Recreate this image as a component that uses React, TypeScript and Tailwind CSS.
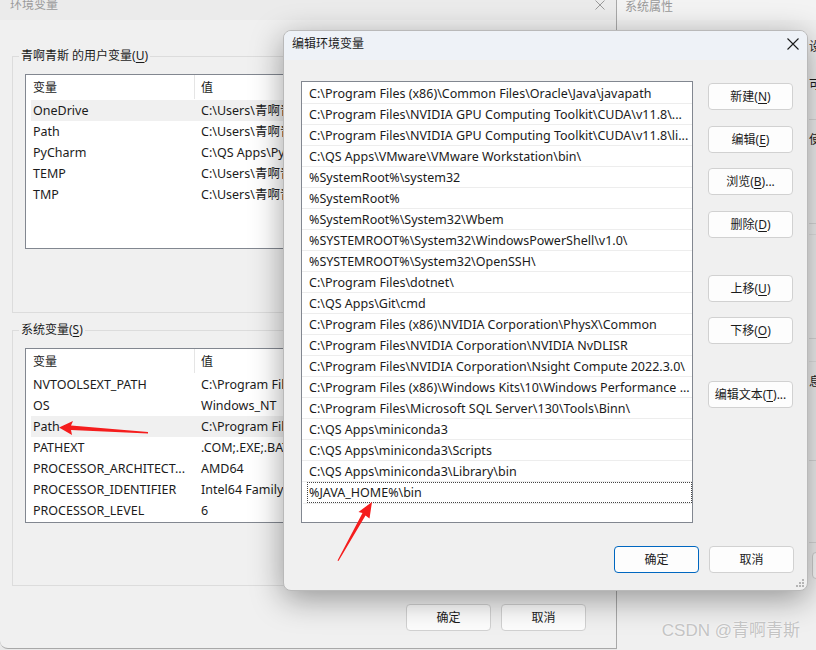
import * as React from 'react';

const FONT = "font-['Noto_Sans','Noto_Sans_CJK_SC',sans-serif]";

const userVars = [
    { name: 'OneDrive', value: 'C:\\Users\\青啊青斯\\OneDrive' },
    { name: 'Path', value: 'C:\\Users\\青啊青斯\\AppData' },
    { name: 'PyCharm', value: 'C:\\QS Apps\\PyCharm\\bin' },
    { name: 'TEMP', value: 'C:\\Users\\青啊青斯\\AppData' },
    { name: 'TMP', value: 'C:\\Users\\青啊青斯\\AppData' },
];

const sysVars = [
    { name: 'NVTOOLSEXT_PATH', value: 'C:\\Program Files\\NVIDIA' },
    { name: 'OS', value: 'Windows_NT' },
    { name: 'Path', value: 'C:\\Program Files\\Common' },
    { name: 'PATHEXT', value: '.COM;.EXE;.BAT;.CMD' },
    { name: 'PROCESSOR_ARCHITECT...', value: 'AMD64' },
    { name: 'PROCESSOR_IDENTIFIER', value: 'Intel64 Family 6 Model' },
    { name: 'PROCESSOR_LEVEL', value: '6' },
];

const paths = [
    'C:\\Program Files (x86)\\Common Files\\Oracle\\Java\\javapath',
    'C:\\Program Files\\NVIDIA GPU Computing Toolkit\\CUDA\\v11.8\\...',
    'C:\\Program Files\\NVIDIA GPU Computing Toolkit\\CUDA\\v11.8\\li...',
    'C:\\QS Apps\\VMware\\VMware Workstation\\bin\\',
    '%SystemRoot%\\system32',
    '%SystemRoot%',
    '%SystemRoot%\\System32\\Wbem',
    '%SYSTEMROOT%\\System32\\WindowsPowerShell\\v1.0\\',
    '%SYSTEMROOT%\\System32\\OpenSSH\\',
    'C:\\Program Files\\dotnet\\',
    'C:\\QS Apps\\Git\\cmd',
    'C:\\Program Files (x86)\\NVIDIA Corporation\\PhysX\\Common',
    'C:\\Program Files\\NVIDIA Corporation\\NVIDIA NvDLISR',
    'C:\\Program Files\\NVIDIA Corporation\\Nsight Compute 2022.3.0\\',
    'C:\\Program Files (x86)\\Windows Kits\\10\\Windows Performance ...',
    'C:\\Program Files\\Microsoft SQL Server\\130\\Tools\\Binn\\',
    'C:\\QS Apps\\miniconda3',
    'C:\\QS Apps\\miniconda3\\Scripts',
    'C:\\QS Apps\\miniconda3\\Library\\bin',
    '%JAVA_HOME%\\bin',
];

// --- Button ---
const Btn = ({ label, hot, suffix, primary }: { label: string; hot?: string; suffix?: string; primary?: boolean }) => (
    <div
        className={`w-[85px] h-[27px] shrink-0 flex items-center justify-center rounded-[4px] border bg-[#fdfdfd] text-[12px] text-[#1b1b1b] ${
            primary ? 'border-[#0067c0]' : 'border-[#d1d1d1]'
        }`}
    >
        {label}
        {hot && (
            <>
                (<span className="underline underline-offset-2">{hot}</span>)
            </>
        )}
        {suffix}
    </div>
);

// --- Variable list (back window) ---
const VarList = ({ rows, selected }: { rows: { name: string; value: string }[]; selected: number }) => (
    <div className="ml-[6px] w-[579px] h-[175px] border border-[#828790] bg-white text-[12.5px] text-[#1b1b1b]">
        <div className="h-[25px] flex items-center ml-[5px] text-[12px]">
            <div className="w-[163px] pl-[2px]">变量</div>
            <div className="w-px h-[24px] self-start bg-[#e5e5e5]" />
            <div className="pl-[6px]">值</div>
        </div>
        {rows.map((r, i) => (
            <div key={r.name} className={`h-[21px] pt-[2px] flex items-center ml-[5px] ${i === selected ? 'bg-[#f0f0f0]' : ''}`}>
                <div className="w-[170px] pl-[2px] whitespace-nowrap overflow-hidden">{r.name}</div>
                <div className="whitespace-nowrap">{r.value}</div>
            </div>
        ))}
    </div>
);

export default function App() {
    return (
        <div className={`relative w-[816px] h-[650px] overflow-hidden bg-[#e9e9e9] ${FONT}`}>
            {/* --- System properties window (far back) --- */}
            <div className="absolute left-[617px] top-[-12px] w-[220px] h-[680px] bg-[#f3f3f3]">
                <div className="h-[32px] flex items-center pl-[8px] pt-[6px] text-[12px] text-[#9a9a9a]">系统属性</div>
                <div className="pl-[192px] text-[12px] leading-[18px] text-[#1b1b1b] bg-[#f0f0f0] h-full">
                    <div className="h-[18px]" />
                    <div className="h-[18px]">设置</div>
                    <div className="h-[20px]" />
                    <div className="h-[18px]">可</div>
                    <div className="h-[25px]" />
                    <div className="h-[12px] border-t border-[#d8d8d8]" />
                    <div className="h-[18px]">使</div>
                    <div className="h-[74px]" />
                    <div className="h-[11px] border-t border-[#d8d8d8]" />
                    <div className="h-[104px] border-t border-[#e2e2e2]" />
                    <div className="h-[23px] border-t border-[#d8d8d8]" />
                    <div className="h-[12px] border-t border-[#e2e2e2]" />
                    <div className="h-[18px]">息</div>
                    <div className="h-[69px]" />
                    <div className="h-[82px] border-t border-[#d8d8d8]" />
                    <div className="h-[10px] border-t border-[#d8d8d8]" />
                    <div className="ml-[3px] w-[85px] h-[27px] rounded-[4px] border border-[#d1d1d1] bg-[#fdfdfd]" />
                </div>
            </div>

            {/* --- Environment variables window (back) --- */}
            <div className="absolute left-0 top-[-12px] w-[617px] h-[661px] bg-[#f0f0f0] border-r border-b border-[#a8a8a8] rounded-bl-[8px] flex flex-col">
                <div className="h-[32px] shrink-0 flex items-center justify-between pl-[10px] pr-[10px] pt-[2px] bg-[#ebebeb] text-[12px] text-[#9a9a9a]">
                    <span>环境变量</span>
                    <svg width="10" height="10" viewBox="0 0 10 10" className="mr-[1px]">
                        <path d="M0.5 0.5 L9.5 9.5 M9.5 0.5 L0.5 9.5" stroke="#9a9a9a" strokeWidth="1" />
                    </svg>
                </div>

                <fieldset className="ml-[12px] mt-[27px] w-[592px] h-[266px] border border-[#dcdcdc] pl-[6px]">
                    <legend className="px-[2px] text-[12px] leading-[18px] text-[#1b1b1b]">
                        青啊青斯 的用户变量(<span className="underline underline-offset-2">U</span>)
                    </legend>
                    <div className="mt-[9px]">
                        <VarList rows={userVars} selected={0} />
                    </div>
                </fieldset>

                <fieldset className="ml-[12px] mt-[8px] w-[592px] h-[265px] border border-[#dcdcdc] pl-[6px]">
                    <legend className="px-[2px] text-[12px] leading-[18px] text-[#1b1b1b]">
                        系统变量(<span className="underline underline-offset-2">S</span>)
                    </legend>
                    <div className="mt-[9px]">
                        <VarList rows={sysVars} selected={2} />
                    </div>
                </fieldset>

                <div className="mt-[18px] flex justify-end gap-[10px] pr-[30px]">
                    <Btn label="确定" />
                    <Btn label="取消" />
                </div>
            </div>

            {/* --- Edit environment variable dialog (front) --- */}
            <div className="absolute left-[283px] top-[30px] w-[525px] h-[561px] rounded-[8px] border border-[#b9b9b9] bg-[#f0f0f0] shadow-[0_8px_32px_rgba(0,0,0,0.38)] overflow-hidden flex flex-col">
                <div className="h-[29px] shrink-0 flex items-center justify-between pl-[8px] pr-[8px] pb-[3px] bg-[#eef2f7] text-[12px] text-[#1b1b1b]">
                    <span>编辑环境变量</span>
                    <svg width="12" height="12" viewBox="0 0 12 12">
                        <path d="M0.5 0.5 L11.5 11.5 M11.5 0.5 L0.5 11.5" stroke="#1b1b1b" strokeWidth="1.1" />
                    </svg>
                </div>

                <div className="flex pl-[17px] pt-[21px]">
                    <div className="w-[392px] h-[442px] border border-[#828790] bg-white pt-px text-[12.5px] text-[#1b1b1b]">
                        {paths.map((p, i) =>
                            i === paths.length - 1 ? (
                                <div key={i} className="h-[21px] pt-[2px] ml-[5px] flex items-center pl-px border border-dotted border-[#444] whitespace-nowrap">
                                    {p}
                                </div>
                            ) : (
                                <div key={i} className="h-[21px] pt-[2px] flex items-center pl-[7px] border-b border-[#ededed] whitespace-nowrap">
                                    {p}
                                </div>
                            )
                        )}
                        <div className="mx-px border-b border-[#ededed] h-[1px]" />
                    </div>

                    <div className="ml-[15px] pt-[1px] flex flex-col">
                        <div className="mt-px"><Btn label="新建" hot="N" /></div>
                        <div className="mt-[16px]"><Btn label="编辑" hot="E" /></div>
                        <div className="mt-[15px]"><Btn label="浏览" hot="B" suffix="..." /></div>
                        <div className="mt-[16px]"><Btn label="删除" hot="D" /></div>
                        <div className="mt-[37px]"><Btn label="上移" hot="U" /></div>
                        <div className="mt-[15px]"><Btn label="下移" hot="O" /></div>
                        <div className="mt-[37px]"><Btn label="编辑文本" hot="T" suffix="..." /></div>
                    </div>
                </div>

                <div className="mt-[23px] flex justify-end gap-[10px] pr-[13px]">
                    <Btn label="确定" primary />
                    <Btn label="取消" />
                </div>

                <svg width="10" height="10" viewBox="0 0 10 10" className="absolute right-[2px] bottom-[2px]">
                    <g fill="#b5b5b5">
                        <rect x="7" y="1" width="2" height="2" />
                        <rect x="4" y="4" width="2" height="2" />
                        <rect x="7" y="4" width="2" height="2" />
                        <rect x="1" y="7" width="2" height="2" />
                        <rect x="4" y="7" width="2" height="2" />
                        <rect x="7" y="7" width="2" height="2" />
                    </g>
                </svg>
            </div>

            {/* --- Red annotation arrows --- */}
            <svg width="816" height="650" viewBox="0 0 816 650" className="absolute left-0 top-0 pointer-events-none">
                <polygon points="59,427.5 73,421 71,425.5 148,432 148,433.5 71,430 72,435" fill="#f51d1d" />
                <polygon points="372,502 369.5,518.5 365.5,515.5 338.5,561 337.5,560.5 362.5,513 358.5,512" fill="#f51d1d" />
            </svg>

            {/* --- Watermark --- */}
            <div className="absolute right-[16px] bottom-[7px] text-[17px] text-[#c4c4c4] font-['Liberation_Sans',sans-serif] [text-shadow:0_0_2px_#ffffff]">
                CSDN @<span className="font-['Noto_Sans_CJK_SC',sans-serif]">青啊青斯</span>
            </div>
        </div>
    );
}
